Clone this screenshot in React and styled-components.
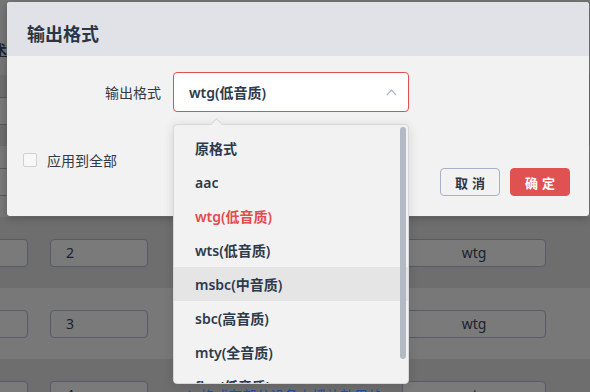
import React from 'react';
import styled, { createGlobalStyle } from 'styled-components';

const GlobalStyle = createGlobalStyle`
	html, body {
		margin: 0;
		padding: 0;
	}
	body {
		font-family: "Noto Sans", "Noto Sans CJK SC", sans-serif;
		background: #727272;
	}
`;

const rows = [
	{ no: '0', fmt: 'wtg' },
	{ no: '1', fmt: 'wtg' },
	{ no: '2', fmt: 'wtg' },
	{ no: '3', fmt: 'wtg' },
	{ no: '4', fmt: 'wtg', note: 'wtg格式在部分设备上播放效果的说明提示' },
];

const options = [
	'原格式',
	'aac',
	'wtg(低音质)',
	'wts(低音质)',
	'msbc(中音质)',
	'sbc(高音质)',
	'mty(全音质)',
	'flac(低音质)',
];

const App = () => {
	return (
		<Page>
			<GlobalStyle />
			<Table>
				<HeadRow>
					<HeadText>技术</HeadText>
				</HeadRow>
				{rows.map((r, i) => (
					<Row key={r.no} $light={i % 2 === 1}>
						<Cell />
						<Cell>{r.no}</Cell>
						<Note>{r.note}</Note>
						<Cell $center>{r.fmt}</Cell>
					</Row>
				))}
			</Table>

			<Modal>
				<Header>输出格式</Header>
				<Body>
					<FormRow>
						<Label>输出格式</Label>
						<Select>
							<span>wtg(低音质)</span>
							<svg width="11" height="7" viewBox="0 0 11 7">
								<polyline
									points="0.8,6.2 5.5,1.2 10.2,6.2"
									fill="none"
									stroke="#a9b1c6"
									strokeWidth="1.2"
								/>
							</svg>
						</Select>
					</FormRow>
					<Footer>
						<CheckLabel>
							<CheckBox />
							应用到全部
						</CheckLabel>
						<Buttons>
							<Button>取消</Button>
							<Button $primary>确定</Button>
						</Buttons>
					</Footer>
				</Body>
			</Modal>

			<Popover>
				<Arrow />
				<List>
					{options.map((o, i) => (
						<Option key={o} $active={i === 2} $hover={i === 4}>
							{o}
						</Option>
					))}
				</List>
				<ScrollThumb />
			</Popover>
		</Page>
	);
};

export default App;

const Page = styled.div`
	position: relative;
	width: 590px;
	height: 392px;
	overflow: hidden;
	background: #727272;
`;

const Table = styled.div`
	display: flex;
	flex-direction: column;
`;

const HeadRow = styled.div`
	height: 75px;
	background: #767676;
	display: flex;
	align-items: center;
`;

const HeadText = styled.span`
	margin-left: -21px;
	margin-top: 22px;
	font-size: 14px;
	font-weight: 700;
	color: #1c2230;
	text-decoration: underline;
	font-family: "Noto Sans CJK SC", sans-serif;
`;

const Row = styled.div`
	height: 71px;
	margin-left: -70px;
	padding-right: 44px;
	display: grid;
	grid-template-columns: 98px 98px 1fr 144px;
	column-gap: 22px;
	align-items: center;
	background: ${(p) => (p.$light ? '#787878' : '#6e6e6e')};
`;

const Cell = styled.div`
	height: 28px;
	box-sizing: border-box;
	border: 1px solid #555b67;
	border-radius: 4px;
	background: #7a7a7a;
	display: flex;
	align-items: center;
	justify-content: ${(p) => (p.$center ? 'center' : 'flex-start')};
	padding-left: ${(p) => (p.$center ? '0' : '15px')};
	font-size: 14px;
	color: #1b2130;
`;

const Note = styled.div`
	padding-left: 6px;
	font-size: 14px;
	color: #1f4f98;
	white-space: nowrap;
	overflow: hidden;
	font-family: "Noto Sans CJK SC", sans-serif;
`;

const Modal = styled.div`
	position: absolute;
	left: 7px;
	top: 2px;
	width: 582px;
	background: #f2f2f2;
	border-radius: 3px;
	overflow: hidden;
	box-shadow: 0 2px 8px rgba(0, 0, 0, 0.25);
`;

const Header = styled.div`
	height: 54px;
	box-sizing: border-box;
	padding: 7px 0 0 20px;
	display: flex;
	align-items: center;
	background: #e1e2e7;
	font-family: "Noto Sans CJK SC", sans-serif;
	font-size: 18px;
	font-weight: 700;
	color: #2b3545;
`;

const Body = styled.div`
	padding: 16px 19px 20px 16px;
`;

const FormRow = styled.div`
	display: flex;
	align-items: center;
	gap: 12px;
`;

const Label = styled.div`
	width: 138px;
	text-align: right;
	font-family: "Noto Sans CJK SC", sans-serif;
	font-size: 14px;
	color: #333a45;
`;

const Select = styled.div`
	width: 236px;
	height: 40px;
	box-sizing: border-box;
	border: 1px solid #e05050;
	border-radius: 4px;
	background: #fff;
	padding: 0 11px 0 15px;
	display: flex;
	align-items: center;
	justify-content: space-between;
	font-size: 14px;
	font-weight: 600;
	color: #2d3a4b;
`;

const Footer = styled.div`
	margin-top: 41px;
	display: flex;
	justify-content: space-between;
	align-items: flex-start;
`;

const CheckLabel = styled.label`
	display: flex;
	align-items: center;
	gap: 10px;
	font-family: "Noto Sans CJK SC", sans-serif;
	font-size: 14px;
	line-height: 14px;
	color: #333a45;
`;

const CheckBox = styled.span`
	width: 14px;
	height: 14px;
	box-sizing: border-box;
	border: 1px solid #d0d0d0;
	border-radius: 2px;
	background: #f7f7f7;
`;

const Buttons = styled.div`
	margin-top: 15px;
	display: flex;
	gap: 10px;
`;

const Button = styled.button`
	width: 60px;
	height: 28px;
	box-sizing: border-box;
	padding: 0 0 0 4px;
	border-radius: 4px;
	border: 1px solid ${(p) => (p.$primary ? '#e05252' : '#a9b0c8')};
	background: ${(p) => (p.$primary ? '#e05252' : '#f2f2f2')};
	color: ${(p) => (p.$primary ? '#fff' : '#2b3545')};
	font-family: "Noto Sans CJK SC", sans-serif;
	font-size: 13px;
	font-weight: 700;
	letter-spacing: 4px;
`;

const Popover = styled.div`
	position: absolute;
	left: 173px;
	top: 124px;
	width: 236px;
	height: 260px;
	box-sizing: border-box;
	border: 1px solid #d8d8d8;
	border-radius: 4px;
	background: #f2f2f2;
	box-shadow: 0 2px 12px rgba(0, 0, 0, 0.12);
`;

const Arrow = styled.span`
	position: absolute;
	top: -5px;
	left: 38px;
	width: 8px;
	height: 8px;
	background: #f2f2f2;
	border-top: 1px solid #d8d8d8;
	border-left: 1px solid #d8d8d8;
	transform: rotate(45deg);
`;

const List = styled.div`
	height: 100%;
	box-sizing: border-box;
	padding-top: 6px;
	overflow: hidden;
	border-radius: 4px;
`;

const Option = styled.div`
	height: 34px;
	padding-left: 21px;
	display: flex;
	align-items: center;
	font-size: 14px;
	font-weight: 600;
	color: ${(p) => (p.$active ? '#e24c4c' : '#2d3a4b')};
	background: ${(p) => (p.$hover ? '#e5e5e5' : 'transparent')};
`;

const ScrollThumb = styled.span`
	position: absolute;
	right: 2px;
	top: 2px;
	width: 6px;
	height: 232px;
	border-radius: 3px;
	background: #b3bac3;
`;
